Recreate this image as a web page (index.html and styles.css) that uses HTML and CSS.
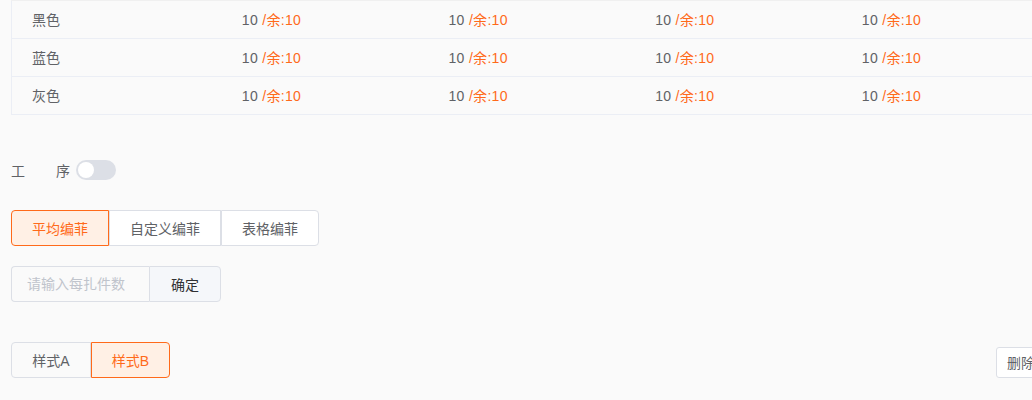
FILE: index.html
```html
<!DOCTYPE html>
<html lang="zh-CN">
<head>
  <meta charset="UTF-8" />
  <meta name="viewport" content="width=device-width, initial-scale=1.0"/>
  <title>编菲设置</title>
  <link rel="stylesheet" href="styles.css">
</head>
<body>

<div class="page">
  <table class="stock">
    <tr>
      <td class="name">黑色</td>
      <td>10 <span class="left">/余:10</span></td>
      <td>10 <span class="left">/余:10</span></td>
      <td>10 <span class="left">/余:10</span></td>
      <td>10 <span class="left">/余:10</span></td>
    </tr>
    <tr>
      <td class="name">蓝色</td>
      <td>10 <span class="left">/余:10</span></td>
      <td>10 <span class="left">/余:10</span></td>
      <td>10 <span class="left">/余:10</span></td>
      <td>10 <span class="left">/余:10</span></td>
    </tr>
    <tr>
      <td class="name">灰色</td>
      <td>10 <span class="left">/余:10</span></td>
      <td>10 <span class="left">/余:10</span></td>
      <td>10 <span class="left">/余:10</span></td>
      <td>10 <span class="left">/余:10</span></td>
    </tr>
  </table>

  <div class="field">
    <span class="label">工序</span>
    <span class="switch"><span class="knob"></span></span>
  </div>

  <div class="btn-group">
    <button class="seg active">平均编菲</button>
    <button class="seg">自定义编菲</button>
    <button class="seg">表格编菲</button>
  </div>

  <div class="input-group">
    <input type="text" placeholder="请输入每扎件数" />
    <button class="append">确定</button>
  </div>

  <div class="style-row">
    <div class="btn-group">
      <button class="seg style">样式A</button>
      <button class="seg style active">样式B</button>
    </div>
    <button class="small">删除</button>
  </div>
</div>

</body>
</html>
```

FILE: styles.css
```css
html, body {
  margin: 0;
  overflow: hidden;
}
body {
  font-family: "Liberation Sans", "Noto Sans CJK SC", sans-serif;
  font-size: 14px;
  color: #606266;
  background: #fafafa;
}
.page {
  width: 1035px;
  padding-left: 11px;
}
.stock {
  border-collapse: collapse;
  width: 1038px;
  border: 1px solid #ebeef5;
  border-top-color: #f0f0f0;
}
.stock td {
  height: 38px;
  padding: 0 20px 2px;
  box-sizing: border-box;
  border-bottom: 1px solid #ebeef5;
  width: 167px;
  letter-spacing: 0.3px;
}
.stock td.name {
  width: 170px;
  letter-spacing: 0;
}
.left {
  color: #ff6a1a;
}
.field {
  display: flex;
  align-items: center;
  margin-top: 45px;
  height: 20px;
}
.label {
  width: 59px;
  text-align: justify;
  text-align-last: justify;
  color: #606266;
  padding-right: 6px;
}
.switch {
  width: 40px;
  height: 20px;
  border-radius: 10px;
  background: #dcdfe6;
  position: relative;
  box-sizing: border-box;
}
.knob {
  position: absolute;
  top: 2px;
  left: 2px;
  width: 16px;
  height: 16px;
  border-radius: 50%;
  background: #fff;
}
.btn-group {
  display: flex;
  margin-top: 30px;
}
button {
  font-family: inherit;
  font-size: 14px;
  cursor: pointer;
}
.seg {
  height: 36px;
  padding: 0 20px;
  background: #fff;
  color: #606266;
  border: 1px solid #dcdfe6;
  border-radius: 0;
}
.seg:first-child {
  border-radius: 4px 0 0 4px;
}
.seg:last-child {
  border-radius: 0 4px 4px 0;
}
.seg.active {
  background: #fff0e5;
  color: #ff6a1a;
  border-color: #ff6a1a;
}
.seg.style {
  background: #fafafa;
  width: 80px;
  padding: 0;
}
.seg.style.active {
  background: #fff0e5;
  width: 79px;
}
.input-group {
  display: flex;
  margin-top: 20px;
  width: 210px;
  height: 36px;
}
.input-group input {
  width: 138px;
  box-sizing: border-box;
  height: 36px;
  padding: 0 15px;
  border: 1px solid #dcdfe6;
  border-right: none;
  border-radius: 4px 0 0 4px;
  background: #fafafa;
  font-family: inherit;
  font-size: 14px;
  color: #606266;
  outline: none;
}
.input-group input::placeholder {
  color: #c0c4cc;
}
.append {
  width: 72px;
  height: 36px;
  border: 1px solid #dcdfe6;
  border-radius: 0 4px 4px 0;
  background: #f5f7fa;
  color: #303133;
}
.style-row {
  display: flex;
  justify-content: space-between;
  align-items: center;
  margin-top: 40px;
}
.style-row .btn-group {
  margin-top: 0;
}
.small {
  height: 31px;
  padding: 0 10px;
  margin-top: 4px;
  background: #fff;
  border: 1px solid #dcdfe6;
  border-radius: 3px;
  color: #606266;
  font-size: 14px;
}
```
